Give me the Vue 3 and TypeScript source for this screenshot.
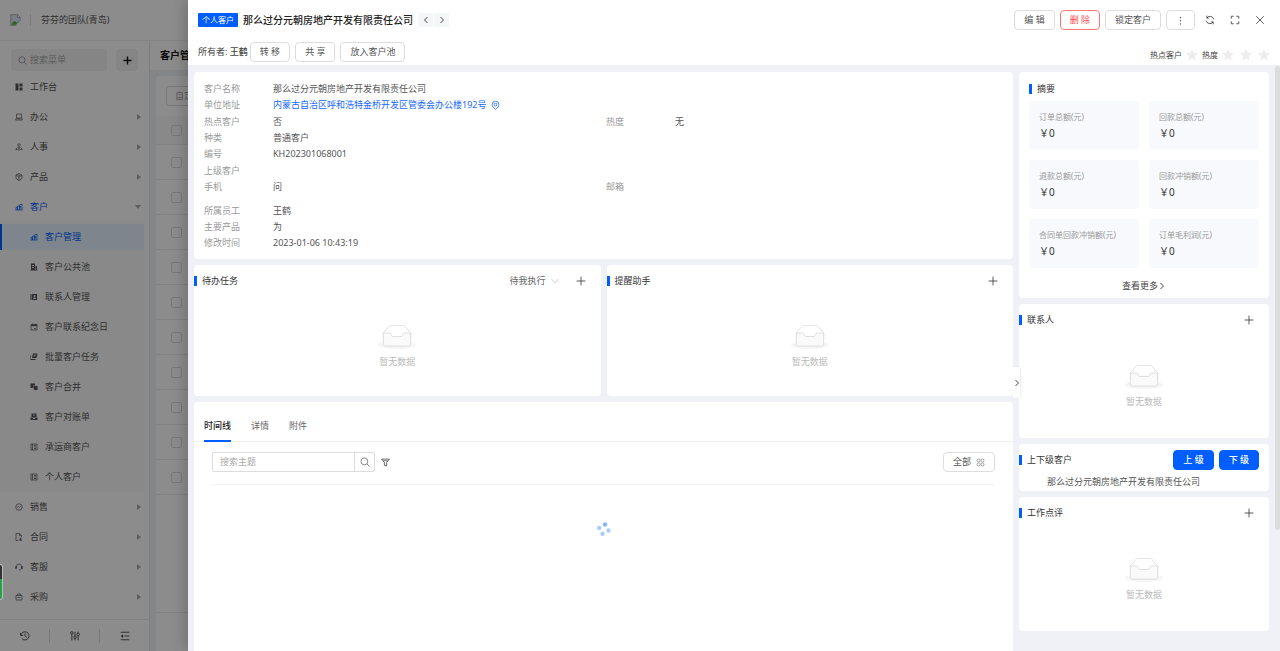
<script setup lang="ts">
import { ref } from 'vue'

interface MenuItem { label: string; icon: string; arrow?: 'closed' | 'open'; active?: boolean }

const topMenu: MenuItem[] = [
  { label: '工作台', icon: 'board' },
  { label: '办公', icon: 'desk', arrow: 'closed' },
  { label: '人事', icon: 'people', arrow: 'closed' },
  { label: '产品', icon: 'cube', arrow: 'closed' },
  { label: '客户', icon: 'chart', arrow: 'open', active: true },
]
const subMenu: MenuItem[] = [
  { label: '客户管理', icon: 'chart', active: true },
  { label: '客户公共池', icon: 'building' },
  { label: '联系人管理', icon: 'contacts' },
  { label: '客户联系纪念日', icon: 'calendar' },
  { label: '批量客户任务', icon: 'batch' },
  { label: '客户合并', icon: 'merge' },
  { label: '客户对账单', icon: 'statement' },
  { label: '承运商客户', icon: 'card' },
  { label: '个人客户', icon: 'card' },
]
const bottomMenu: MenuItem[] = [
  { label: '销售', icon: 'sale' },
  { label: '合同', icon: 'contract' },
  { label: '客服', icon: 'headset' },
  { label: '采购', icon: 'bag' },
]

const icons: Record<string, string> = {
  board: '<path fill="currentColor" stroke="none" d="M1 1h6v14H1zM9 1h6v6H9zM9 9h6v6H9z"/>',
  desk: '<path d="M3 2h10v8H3zM3 10l-2 4h14l-2-4M6 10v2h4v-2"/>',
  people: '<circle cx="8" cy="4" r="2.500"/><path d="M8 7v4M5 9l3 2 3-2M5 9l-3 3M11 9l3 3M1 13h5M10 13h5M6 14h4"/>',
  cube: '<path d="M8 1l6 3v7l-6 4-6-4V4zM2 4l6 4 6-4M8 8v7M5 2.500l6 3.500"/>',
  chart: '<path d="M1 14h14M2 14V9h3v5M5 14V6h4v8M9 14V4l5-2v12M11 6v5"/>',
  building: '<path fill="currentColor" stroke="none" fill-rule="evenodd" d="M2 1h8v13H2zM11 6h3v8h1v1H1v-1h10zM4 4v2h4V4zM4 8v2h4V8z"/>',
  contacts: '<path fill="currentColor" stroke="none" fill-rule="evenodd" d="M1 2h2v12H1zM4 2h10v12H4zM9 4a2 2 0 000 4 2 2 0 000-4M6 12h6c0-4-6-4-6 0"/>',
  calendar: '<path d="M2 3h12v11H2zM5 1v3M11 1v3M8 11h4"/><path stroke-width="2.500" d="M2 5h12"/>',
  batch: '<path fill="currentColor" stroke="none" fill-rule="evenodd" d="M6 1h9l-2 9H4zM2 4v8h9v2H1V4zM7 4l2 3 4-4"/>',
  merge: '<path fill="currentColor" stroke="none" d="M1 1h9v4H6v5H1zM7 6h8v8H8v-3H7z"/>',
  statement: '<path fill="currentColor" stroke="none" fill-rule="evenodd" d="M3 1h10v7H3zM1 9h14v5H1zM6 3v2h4V3zM6 10v2h4v-2z"/>',
  card: '<path d="M2 2h12v12H2zM5 2v12M8 5h4M8 11h4M10 5v6"/>',
  sale: '<circle cx="8" cy="8" r="6.500"/><path d="M4 9l3-2 2 2 3-3"/>',
  contract: '<path d="M7 15H2V1h7l4 4v3M9 1v4h4M11 9v6M8 12h6M9 15h5"/>',
  headset: '<path d="M3 10V7a5 5 0 0110 0v3c0 3-2 4-5 4M1 7v4h2V7zM13 7v4h2V7z"/>',
  bag: '<path d="M2 5h12v9H2zM5 5V2h6v3M5 9h6"/>',
  search: '<circle cx="7" cy="7" r="5.500"/><path d="M11 11l4 4"/>',
  plus: '<path d="M8 1v14M1 8h14"/>',
  left: '<path d="M11 2L5 8l6 6"/>',
  right: '<path d="M5 2l6 6-6 6"/>',
  down: '<path d="M1 4l7 8 7-8"/>',
  refresh: '<path d="M14 7A6 6 0 003 5M2 9a6 6 0 0011 2M3 1v4h3M13 15v-4h-3"/>',
  full: '<path d="M2 6V2h4M10 2h4v4M14 10v4h-4M6 14H2v-4"/>',
  close: '<path d="M2 2l12 12M14 2L2 14"/>',
  pin: '<path d="M8 15C4 12 2 9 2 6.500a6 6 0 0112 0C14 9 12 12 8 15z"/><circle cx="8" cy="6.500" r="2.500"/>',
  filter: '<path d="M1 2h14l-5 6v6l-4-1V8zM4 5h8"/>',
  star: '<path fill="currentColor" stroke="none" d="M8 0l2.400 5.100 5.600.7-4.100 3.900 1 5.700L8 12.700l-4.900 2.700 1-5.700L0 5.800l5.600-.7z"/>',
  history: '<path d="M1 3v4h4M1.500 7A6.500 6.500 0 113 12M8 4v4l3 2"/>',
  tune: '<path d="M3 5v10M8 1v7M8 12v3M13 1v2M13 8v7"/><circle cx="3" cy="3" r="2"/><circle cx="8" cy="10" r="2"/><circle cx="13" cy="5.500" r="2"/>',
  fold: '<path d="M1 2h14M7 8h8M1 14h14"/><path fill="currentColor" stroke="none" d="M5 5L1 8l4 3z"/>',
  apps: '<circle cx="4.500" cy="4.500" r="2.700"/><circle cx="11.500" cy="4.500" r="2.700"/><circle cx="4.500" cy="11.500" r="2.700"/><circle cx="11.500" cy="11.500" r="2.700"/>',
  more: '<g fill="currentColor" stroke="none"><circle cx="8" cy="3" r="1.300"/><circle cx="8" cy="8.500" r="1.300"/><circle cx="8" cy="14" r="1.300"/></g>',
  empty: '<ellipse cx="32" cy="33" rx="32" ry="7" fill="#f5f5f5" stroke="none"/><path fill="#fff" d="M55 12.800L44.900 1.300C44.400.5 43.700 0 42.900 0H21.100c-.8 0-1.500.5-2 1.300L9 12.800V22h46z"/><path fill="#fafafa" d="M41.600 15.900c0-1.600 1-2.900 2.200-2.900H55v18.100c0 2.200-1.300 3.900-3 3.900H12c-1.700 0-3-1.700-3-3.900V13h11.200c1.200 0 2.200 1.300 2.200 2.900s1 2.900 2.200 2.900h14.800c1.200 0 2.200-1.300 2.200-2.900z"/>',
}

const primaryInfo = [
  { label: '客户名称', value: '那么过分元朝房地产开发有限责任公司' },
  { label: '单位地址', value: '内蒙古自治区呼和浩特金桥开发区管委会办公楼192号', link: true },
  { label: '热点客户', value: '否', label2: '热度', value2: '无' },
  { label: '种类', value: '普通客户' },
  { label: '编号', value: 'KH202301068001' },
  { label: '上级客户', value: '' },
  { label: '手机', value: '问', label2: '邮箱', value2: '' },
]
const ownerInfo = [
  { label: '所属员工', value: '王鹤' },
  { label: '主要产品', value: '为' },
  { label: '修改时间', value: '2023-01-06 10:43:19' },
]
const summary = ['订单总额(元)', '回款总额(元)', '退款总额(元)', '回款冲销额(元)', '合同单回款冲销额(元)', '订单毛利润(元)']
const tabs = ['时间线', '详情', '附件']
const activeTab = ref('时间线')
const taskScope = ref('待我执行')
const keyword = ref('')
</script>

<template>
  <div class="app">
    <header class="topbar">
      <svg class="logo" viewBox="0 0 16 18" aria-hidden="true">
        <path d="M1 1h10l4 4v12H1z" fill="#dbe6f8" stroke="#8f8f8f" />
        <path d="M2 16l4-6 4 3 4-3v1l-6 5z" fill="#4caf35" />
        <path d="M11 1v4h4" fill="#fff" stroke="#8f8f8f" />
        <path d="M16 9l-8 9h8z" fill="#fff" />
      </svg>
      <span class="team">芬芬的团队(青岛)</span>
    </header>

    <div class="workspace">
      <aside class="sidebar">
        <div class="side-tools">
          <label class="menu-search">
            <svg class="ico s9" viewBox="0 0 16 16" v-html="icons.search" />
            <input type="text" placeholder="搜索菜单" aria-label="搜索菜单" />
          </label>
          <button class="side-add" aria-label="新增"><svg class="ico s9 bold" viewBox="0 0 16 16" v-html="icons.plus" /></button>
        </div>
        <nav class="menu">
          <a v-for="m in topMenu" :key="m.label" href="#" class="item" :class="{ on: m.active }">
            <svg class="ico s8" viewBox="0 0 16 16" v-html="icons[m.icon]" />
            <span>{{ m.label }}</span>
            <i v-if="m.arrow" class="caret" :class="m.arrow" />
          </a>
          <div class="submenu">
            <a v-for="m in subMenu" :key="m.label" href="#" class="item sub" :class="{ on: m.active }">
              <svg class="ico s8" viewBox="0 0 16 16" v-html="icons[m.icon]" />
              <span>{{ m.label }}</span>
            </a>
          </div>
          <a v-for="m in bottomMenu" :key="m.label" href="#" class="item">
            <svg class="ico s8" viewBox="0 0 16 16" v-html="icons[m.icon]" />
            <span>{{ m.label }}</span>
            <i class="caret closed" />
          </a>
        </nav>
        <footer class="side-foot">
          <button aria-label="历史"><svg class="ico s10" viewBox="0 0 16 16" v-html="icons.history" /></button>
          <button aria-label="设置"><svg class="ico s10" viewBox="0 0 16 16" v-html="icons.tune" /></button>
          <button aria-label="收起"><svg class="ico s10" viewBox="0 0 16 16" v-html="icons.fold" /></button>
        </footer>
      </aside>

      <main class="list">
        <h1>客户管理</h1>
        <section class="list-card">
          <div class="list-tools"><button>自定义</button></div>
          <div class="list-row titles"><input type="checkbox" aria-label="全选" /></div>
          <div v-for="n in 10" :key="n" class="list-row"><input type="checkbox" :aria-label="'第' + n + '行'" /></div>
          <div class="list-foot" />
        </section>
      </main>
    </div>

    <div class="mask" />
    <div class="edge-widget" />

    <section class="drawer">
      <header class="head">
        <div class="line">
          <span class="tag">个人客户</span>
          <h2>那么过分元朝房地产开发有限责任公司</h2>
          <div class="pager">
            <button aria-label="上一个"><svg class="ico s8" viewBox="0 0 16 16" v-html="icons.left" /></button>
            <button aria-label="下一个"><svg class="ico s8" viewBox="0 0 16 16" v-html="icons.right" /></button>
          </div>
          <div class="actions">
            <button class="btn">编 辑</button>
            <button class="btn danger">删 除</button>
            <button class="btn">锁定客户</button>
            <button class="btn" aria-label="更多"><svg class="ico s9" viewBox="0 0 16 16" v-html="icons.more" /></button>
            <button class="tool" aria-label="刷新"><svg class="ico s10" viewBox="0 0 16 16" v-html="icons.refresh" /></button>
            <button class="tool" aria-label="全屏"><svg class="ico s10" viewBox="0 0 16 16" v-html="icons.full" /></button>
            <button class="tool" aria-label="关闭"><svg class="ico s10" viewBox="0 0 16 16" v-html="icons.close" /></button>
          </div>
        </div>
        <div class="line second">
          <span class="owner">所有者: <b>王鹤</b></span>
          <div class="owner-actions">
            <button class="btn">转 移</button>
            <button class="btn">共 享</button>
            <button class="btn">放入客户池</button>
          </div>
          <div class="rating">
            <span>热点客户</span>
            <button aria-label="热点客户"><svg class="ico s12" viewBox="0 0 16 16" v-html="icons.star" /></button>
            <span>热度</span>
            <div class="stars">
              <button v-for="n in 3" :key="n" :aria-label="'热度' + n"><svg class="ico s12" viewBox="0 0 16 16" v-html="icons.star" /></button>
            </div>
          </div>
        </div>
      </header>

      <div class="body">
        <div class="main-col">
          <section class="card info">
            <dl>
              <div v-for="r in primaryInfo" :key="r.label" class="row">
                <dt>{{ r.label }}</dt>
                <dd>
                  <a v-if="r.link" href="#">{{ r.value }}<svg class="ico s9" viewBox="0 0 16 16" v-html="icons.pin" /></a>
                  <template v-else>{{ r.value }}</template>
                </dd>
                <template v-if="r.label2"><dt>{{ r.label2 }}</dt><dd>{{ r.value2 }}</dd></template>
              </div>
            </dl>
            <dl>
              <div v-for="r in ownerInfo" :key="r.label" class="row"><dt>{{ r.label }}</dt><dd>{{ r.value }}</dd></div>
            </dl>
          </section>

          <div class="pair">
            <section class="card">
              <div class="card-head">
                <h3>待办任务</h3>
                <label class="scope">
                  <select v-model="taskScope" aria-label="任务范围"><option>待我执行</option></select>
                  <svg class="ico s8" viewBox="0 0 16 16" v-html="icons.down" />
                </label>
                <button class="add" aria-label="新增待办"><svg class="ico s10" viewBox="0 0 16 16" v-html="icons.plus" /></button>
              </div>
              <div class="empty"><svg class="ico" viewBox="0 0 64 41" v-html="icons.empty" /><p>暂无数据</p></div>
            </section>
            <section class="card">
              <div class="card-head">
                <h3>提醒助手</h3>
                <button class="add" aria-label="新增提醒"><svg class="ico s10" viewBox="0 0 16 16" v-html="icons.plus" /></button>
              </div>
              <div class="empty"><svg class="ico" viewBox="0 0 64 41" v-html="icons.empty" /><p>暂无数据</p></div>
            </section>
          </div>

          <section class="card timeline">
            <nav class="tabs">
              <button v-for="t in tabs" :key="t" :class="{ on: t === activeTab }" @click="activeTab = t">{{ t }}</button>
            </nav>
            <div class="filters">
              <div class="search">
                <input v-model="keyword" type="text" placeholder="搜索主题" aria-label="搜索主题" />
                <button aria-label="搜索"><svg class="ico s10" viewBox="0 0 16 16" v-html="icons.search" /></button>
              </div>
              <button class="tool" aria-label="筛选"><svg class="ico s9" viewBox="0 0 16 16" v-html="icons.filter" /></button>
              <button class="btn all">全部<svg class="ico s9" viewBox="0 0 16 16" v-html="icons.apps" /></button>
            </div>
            <svg class="spinner" viewBox="0 0 14 14" role="img" aria-label="加载中">
              <circle cx="8" cy="2.500" r="2.200" fill="#85b3ff" />
              <circle cx="11.500" cy="8.500" r="2.200" fill="#adcbff" />
              <circle cx="5.500" cy="11.800" r="2.200" fill="#adcbff" />
              <circle cx="2.200" cy="6" r="2.200" fill="#adcbff" />
            </svg>
          </section>
        </div>

        <div class="side-col">
          <button class="handle" aria-label="收起侧栏"><svg class="ico s8" viewBox="0 0 16 16" v-html="icons.right" /></button>
          <section class="card summary">
            <h3>摘要</h3>
            <div class="tiles">
              <div v-for="s in summary" :key="s" class="tile"><p>{{ s }}</p><strong>￥0</strong></div>
            </div>
            <a href="#" class="more">查看更多<svg class="ico s8" viewBox="0 0 16 16" v-html="icons.right" /></a>
          </section>

          <section class="card">
            <div class="card-head">
              <h3>联系人</h3>
              <button class="add" aria-label="新增联系人"><svg class="ico s10" viewBox="0 0 16 16" v-html="icons.plus" /></button>
            </div>
            <div class="empty tall"><svg class="ico" viewBox="0 0 64 41" v-html="icons.empty" /><p>暂无数据</p></div>
          </section>

          <section class="card relation">
            <div class="card-head">
              <h3>上下级客户</h3>
              <button class="btn primary">上 级</button>
              <button class="btn primary">下 级</button>
            </div>
            <p>那么过分元朝房地产开发有限责任公司</p>
          </section>

          <section class="card">
            <div class="card-head">
              <h3>工作点评</h3>
              <button class="add" aria-label="新增点评"><svg class="ico s10" viewBox="0 0 16 16" v-html="icons.plus" /></button>
            </div>
            <div class="empty tall"><svg class="ico" viewBox="0 0 64 41" v-html="icons.empty" /><p>暂无数据</p></div>
          </section>
        </div>
        <div class="scroll"><i /></div>
      </div>
    </section>
  </div>
</template>

<style>
body { margin: 0; overflow: hidden; }
</style>

<style scoped>
.app, .app * { box-sizing: border-box; }
.app {
  position: relative;
  height: 100vh;
  display: flex;
  flex-direction: column;
  background: #fff;
  color: #444;
  font: 9px/16px "Noto Sans", "Noto Sans CJK SC", sans-serif;
}
h1, h2, h3, p, dl, dd { margin: 0; }
button, input, select { font: inherit; color: inherit; border: 0; background: none; padding: 0; margin: 0; outline: 0; }
button { display: inline-flex; align-items: center; justify-content: center; cursor: pointer; }
a { color: inherit; text-decoration: none; }
.ico { flex: none; fill: none; stroke: currentColor; stroke-width: 1.4; }
.bold { stroke-width: 2.5; }
.s8 { width: 8px; height: 8px; }
.s9 { width: 9px; height: 9px; }
.s10 { width: 10px; height: 10px; }
.s12 { width: 12px; height: 12px; }

/* page under the drawer */
.topbar { flex: none; height: 41px; display: flex; align-items: center; padding: 0 10px; border-bottom: 1px solid #f0f0f0; }
.logo { width: 11px; height: 12px; }
.team { margin-left: 9px; padding-left: 10px; border-left: 1px solid #ddd; line-height: 12px; color: #555; }
.workspace { flex: 1; min-height: 0; display: flex; }
.sidebar { width: 150px; flex: none; display: flex; flex-direction: column; border-right: 1px solid #e2e4ea; }
.side-tools { display: flex; gap: 9px; padding: 8px 11px 0; }
.menu-search { display: flex; align-items: center; gap: 3px; width: 96px; height: 22px; padding: 0 7px; border-radius: 4px; background: #f3f3f3; color: #888; }
.menu-search input { width: 100%; min-width: 0; }
input::placeholder { color: #aaa; opacity: 1; }
.side-add { width: 22px; height: 22px; border-radius: 4px; background: #f3f3f3; color: #111; }
.menu { flex: 1; min-height: 0; padding-top: 1px; overflow: hidden; }
.item { display: flex; align-items: center; gap: 7px; height: 30px; padding: 0 8px 0 15px; color: #555; }
.item.on { color: #005eff; }
.submenu { display: flow-root; margin-right: 5px; background: #fafafa; }
.item.sub { padding-left: 30px; }
.item.sub.on { height: 26px; margin: 2px 0; padding-left: 28px; border-left: 2px solid #005eff; background: #e6f3ff; }
.caret { margin-left: auto; border: 3px solid transparent; }
.caret.closed { border-left: 4px solid #aaa; border-right: 0; }
.caret.open { border-top: 4px solid #aaa; border-bottom: 0; }
.side-foot { flex: none; height: 32px; display: flex; align-items: center; border-top: 1px solid #eaeaea; }
.side-foot button { flex: 1; height: 14px; }
.side-foot button + button { border-left: 1px solid #ddd; }
.list { flex: 1; min-width: 0; display: flex; flex-direction: column; background: #f0f2f6; }
h1 { padding: 0 10px; font-size: 10px; line-height: 29px; color: #111; background: #fff; }
.list-card { flex: 1; margin: 6px 6px 0; background: #fff; border-radius: 4px 4px 0 0; }
.list-tools { padding: 10px; }
.list-tools button { height: 20px; padding: 0 8px; border: 1px solid #ddd; border-radius: 2px; color: #aaa; }
.list-row { display: flex; align-items: center; height: 35px; padding-left: 15px; border-bottom: 1px solid #eee; }
.list-row.titles { height: 29px; background: #fafafa; }
.list-row input { appearance: none; width: 11px; height: 11px; border: 1px solid #ddd; border-radius: 2px; }
.list-foot { height: 118px; border-bottom: 1px solid #eee; }

/* drawer */
.mask { position: absolute; inset: 0; background: rgba(0, 0, 0, .45); }
.edge-widget { position: absolute; left: 0; top: 564px; width: 3px; height: 36px; border: 1px solid #bbb; border-left: 0; border-radius: 0 3px 3px 0; background: linear-gradient(#333 42%, #26a148 42%); }
.drawer {
  position: absolute;
  inset: 0 0 0 188px;
  display: flex;
  flex-direction: column;
  overflow: hidden;
  background: #eff1f6;
  box-shadow: -4px 0 12px rgba(0, 0, 0, .18);
}
.head { flex: none; height: 65px; padding: 10px 10px 0; background: #fff; }
.line { display: flex; align-items: center; height: 20px; }
.second { height: 22px; margin-top: 11px; gap: 2px; }
.tag { padding: 0 4px; line-height: 14px; font-size: 8px; border-radius: 1px; background: #005eff; color: #fff; }
h2 { margin-left: 5px; font-size: 10px; font-weight: 500; color: #222; }
.pager { display: flex; gap: 1px; margin-left: 5px; }
.pager button { width: 15px; height: 14px; background: #f5f6f7; border-radius: 2px; }
.pager .ico, .more .ico, .handle .ico { stroke-width: 2; }
.actions { display: flex; align-items: center; gap: 5px; margin-left: auto; }
.btn { height: 20px; min-width: 40px; padding: 0 9px; border: 1px solid #ddd; border-radius: 4px; background: #fff; color: #555; }
.actions .btn[aria-label] { min-width: 29px; }
.tool { width: 20px; height: 20px; }
.danger { border-color: #ff7a75; color: #ff4d4f; }
.primary { border-color: #005eff; background: #005eff; color: #fff; font-weight: 500; }
.owner b { font-weight: 500; }
.owner-actions { display: flex; gap: 5px; }
.rating { display: flex; align-items: center; align-self: flex-end; gap: 4px; margin-left: auto; font-size: 8px; }
.rating button { color: #eee; }
.stars { display: flex; gap: 6px; }
.body { flex: 1; min-height: 0; display: flex; align-items: stretch; gap: 6px; padding: 7px 0 0 6px; }
.main-col { flex: 1; min-width: 0; display: flex; flex-direction: column; gap: 6px; }
.side-col { position: relative; width: 250px; flex: none; display: flex; flex-direction: column; gap: 6px; }
.card { flex: none; border-radius: 4px; background: #fff; }
.info { display: flex; flex-direction: column; gap: 8px; padding: 9px 10px 8px; }
.info dl { display: grid; align-content: space-between; }
.info dl:first-child { min-height: 114px; }
.row { display: grid; grid-template-columns: 69px 333px 69px 1fr; height: 16px; }
dt { color: #999; }
dd { color: #555; white-space: nowrap; }
dd a { display: inline-flex; align-items: center; gap: 5px; color: #1769ff; }
.pair { display: grid; grid-template-columns: 1fr 1fr; gap: 6px; }
.card-head { display: flex; align-items: center; height: 31px; padding-right: 10px; }
h3 { margin-right: auto; font-size: 9px; font-weight: 400; line-height: 10px; padding-left: 5px; border-left: 3px solid #005eff; color: #333; }
.add { width: 20px; height: 20px; }
.scope { display: flex; align-items: center; gap: 4px; margin-right: 12px; }
.scope select { appearance: none; color: #666; }
.scope .ico { color: #bbb; }
.empty { display: flex; flex-direction: column; align-items: center; gap: 4px; height: 100px; padding-top: 29px; color: #bbb; }
.empty.tall { height: 103px; padding-top: 30px; }
.empty .ico { width: 38px; height: 25px; color: #d9d9d9; }
.timeline { flex: 1 0 auto; border-radius: 4px 4px 0 0; }
.tabs { display: flex; gap: 20px; height: 40px; padding: 10px 10px 0; border-bottom: 1px solid #f0f0f0; }
.tabs button { height: 30px; border-bottom: 2px solid transparent; color: #666; }
.tabs .on { border-color: #005eff; color: #222; font-weight: 500; }
.filters { display: flex; align-items: center; margin: 0 18px; padding: 10px 0 12px; border-bottom: 1px solid #f0f0f0; }
.search { display: flex; width: 163px; height: 20px; border: 1px solid #ddd; border-radius: 2px; }
.search input { flex: 1; min-width: 0; padding: 0 7px; }
.search button { width: 20px; border-left: 1px solid #ddd; color: #777; }
.all { margin-left: auto; gap: 5px; }
.all .ico { color: #888; }
.spinner { display: block; width: 14px; height: 14px; margin: 37px auto 0; }
.handle { position: absolute; left: -6px; top: 295px; width: 7px; height: 31px; background: #fff; border-radius: 0 3px 3px 0; box-shadow: 1px 0 2px rgba(0, 0, 0, .08); }
.summary { display: flex; flex-direction: column; padding: 12px 10px 4px; }
.tiles { display: grid; grid-template-columns: 1fr 1fr; gap: 10px; margin-top: 7px; }
.tile { height: 49px; padding: 8px 10px; border-radius: 3px; background: #f8f9fd; }
.tile p { font-size: 8px; color: #999; white-space: nowrap; }
.tile strong { display: block; font-size: 10px; font-weight: 400; color: #333; }
.more { display: flex; align-items: center; justify-content: center; margin-top: 10px; }
.relation { padding-bottom: 2px; }
.relation .btn { margin-left: 5px; }
.relation p { padding: 0 28px; line-height: 14px; color: #555; }
.scroll { width: 5px; flex: none; }
.scroll i { display: block; height: 464px; margin-top: -6px; border-radius: 3px; background: #dcdcdc; }
</style>
